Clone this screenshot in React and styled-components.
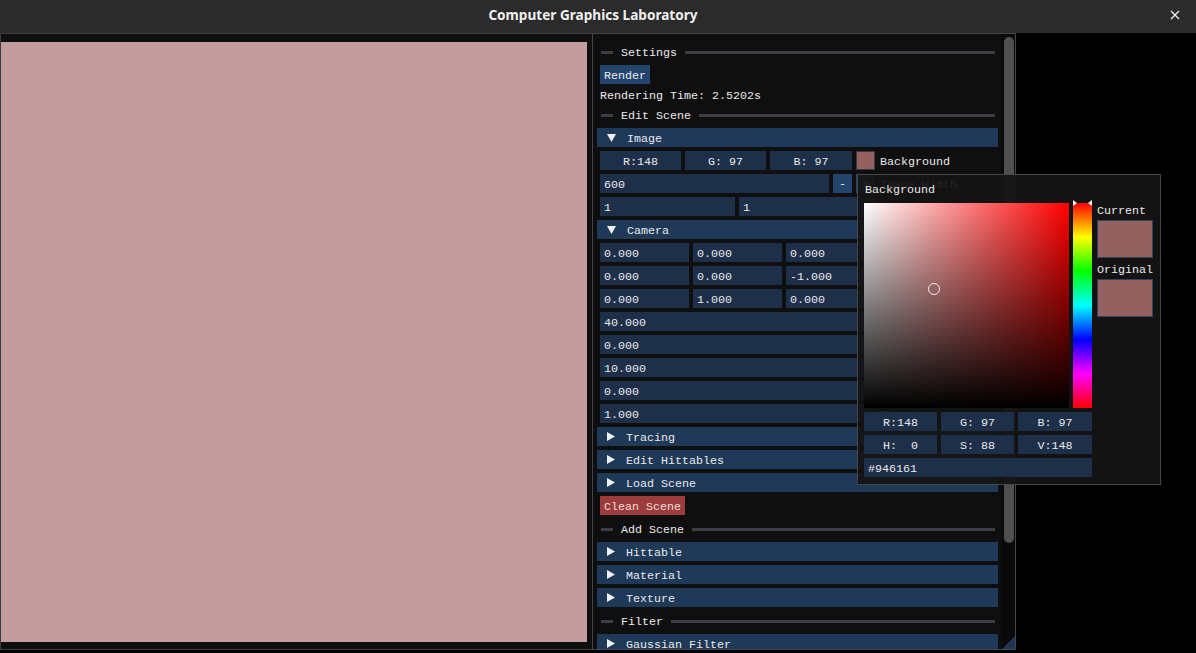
import styled, { createGlobalStyle } from "styled-components";

const mono = `"Liberation Mono", "DejaVu Sans Mono", monospace`;
const SWATCH = "#946161";

const GlobalStyle = createGlobalStyle`
  html, body {
    margin: 0;
    padding: 0;
    background: #000000;
    overflow: hidden;
  }
  * {
    box-sizing: border-box;
  }
`;

const cameraVectors = [
  { values: ["0.000", "0.000", "0.000"], label: "Look From" },
  { values: ["0.000", "0.000", "-1.000"], label: "Look At" },
  { values: ["0.000", "1.000", "0.000"], label: "Vup" },
];

const cameraScalars = [
  { value: "40.000", label: "Vfov" },
  { value: "0.000", label: "Defocus Angle" },
  { value: "10.000", label: "Focus Distance" },
  { value: "0.000", label: "Time 0" },
  { value: "1.000", label: "Time 1" },
];

function Arrow({ open }) {
  return open ? (
    <svg width="9" height="8" viewBox="0 0 9 8">
      <polygon points="0,0 9,0 4.5,8" fill="#f0f0f0" />
    </svg>
  ) : (
    <svg width="8" height="9" viewBox="0 0 8 9">
      <polygon points="0,0 8,4.5 0,9" fill="#f0f0f0" />
    </svg>
  );
}

function Header({ open, children }) {
  return (
    <HeaderBar>
      <Arrow open={open} />
      <HeaderLabel>{children}</HeaderLabel>
    </HeaderBar>
  );
}

function SeparatorText({ children }) {
  return (
    <SepRow>
      <SepLine $short />
      <SepLabel>{children}</SepLabel>
      <SepLine />
    </SepRow>
  );
}

export default function App() {
  return (
    <Screen>
      <GlobalStyle />
      <TitleBar>
        <span />
        <Title>Computer Graphics Laboratory</Title>
        <CloseButton>
          <svg width="10" height="10" viewBox="0 0 10 10">
            <path d="M1 1 L9 9 M9 1 L1 9" stroke="#f0f0f0" strokeWidth="1.3" />
          </svg>
        </CloseButton>
      </TitleBar>

      <Body>
        <ImageWindow>
          <RenderImage />
        </ImageWindow>

        <SettingsWindow>
          <Content>
            <SeparatorText>Settings</SeparatorText>
            <Button>Render</Button>
            <TextLine>Rendering Time: 2.5202s</TextLine>
            <SeparatorText>Edit Scene</SeparatorText>

            <Header open>Image</Header>
            <ItemRow>
              <Field $w={81} $center>R:148</Field>
              <Field $w={81} $center>G: 97</Field>
              <Field $w={82} $center>B: 97</Field>
              <Swatch />
              <Label>Background</Label>
            </ItemRow>
            <ItemRow>
              <Field $w={229}>600</Field>
              <SmallButton>-</SmallButton>
              <SmallButton>+</SmallButton>
              <Label>Image Width</Label>
            </ItemRow>
            <ItemRow>
              <Field $w={135}>1</Field>
              <Field $w={136}>1</Field>
              <Label>Samples / Depth</Label>
            </ItemRow>

            <Header open>Camera</Header>
            {cameraVectors.map((row) => (
              <ItemRow key={row.label}>
                {row.values.map((v, i) => (
                  <Field key={i} $w={89}>
                    {v}
                  </Field>
                ))}
                <Label>{row.label}</Label>
              </ItemRow>
            ))}
            {cameraScalars.map((row) => (
              <ItemRow key={row.label}>
                <Field $w={275}>{row.value}</Field>
                <Label>{row.label}</Label>
              </ItemRow>
            ))}

            <Header>Tracing</Header>
            <Header>Edit Hittables</Header>
            <Header>Load Scene</Header>
            <Button $danger>Clean Scene</Button>

            <SeparatorText>Add Scene</SeparatorText>
            <Header>Hittable</Header>
            <Header>Material</Header>
            <Header>Texture</Header>

            <SeparatorText>Filter</SeparatorText>
            <Header>Gaussian Filter</Header>
          </Content>
          <ScrollTrack>
            <ScrollGrab />
          </ScrollTrack>
          <ResizeGrip />
        </SettingsWindow>
      </Body>

      <ColorPopup>
        <PopupTitle>Background</PopupTitle>
        <PickerRow>
          <SVSquare>
            <PickerCircle />
          </SVSquare>
          <HueBar>
            <HueArrow />
            <HueArrow $right />
          </HueBar>
          <SideColumn>
            <TextLine>Current</TextLine>
            <BigSwatch />
            <TextLine>Original</TextLine>
            <BigSwatch />
          </SideColumn>
        </PickerRow>
        <PopupFields>
          <Field $center>R:148</Field>
          <Field $center>G: 97</Field>
          <Field $center>B: 97</Field>
          <Field $center>H:  0</Field>
          <Field $center>S: 88</Field>
          <Field $center>V:148</Field>
          <HexField>#946161</HexField>
        </PopupFields>
      </ColorPopup>
    </Screen>
  );
}

const Screen = styled.div`
  position: relative;
  width: 1196px;
  height: 653px;
  background: #000000;
  display: flex;
  flex-direction: column;
  overflow: hidden;
  font-family: ${mono};
  font-size: 11.67px;
  color: #eaeaea;
`;

const TitleBar = styled.div`
  height: 33px;
  flex-shrink: 0;
  background: #2b2b2b;
  display: grid;
  grid-template-columns: 1fr auto 1fr;
  align-items: center;
  padding: 0 10px 3px 0;
`;

const Title = styled.div`
  font-family: "Noto Sans", "Open Sans", sans-serif;
  font-weight: 700;
  font-size: 13.6px;
  color: #f0f0f0;
  padding-bottom: 1px;
`;

const CloseButton = styled.div`
  justify-self: end;
  display: flex;
  padding-right: 6px;
`;

const Body = styled.div`
  display: flex;
  align-items: flex-start;
`;

const ImageWindow = styled.div`
  width: 592px;
  height: 617px;
  background: #0f0f0f;
  border: 1px solid #3b3b42;
  border-right: none;
  padding: 8px 5px 7px 0;
`;

const RenderImage = styled.div`
  width: 586px;
  height: 600px;
  background: #c39d9d;
`;

const SettingsWindow = styled.div`
  position: relative;
  width: 424px;
  height: 617px;
  background: #0f0f0f;
  border: 1px solid #45454e;
  display: flex;
  overflow: hidden;
`;

const Content = styled.div`
  flex: 1;
  min-width: 0;
  padding: 8px 6px 0 7px;
  display: flex;
  flex-direction: column;
  gap: 4px;
  white-space: pre;
  line-height: 13px;
`;

const ScrollTrack = styled.div`
  width: 14px;
  flex-shrink: 0;
  background: #0a0a0a;
  padding: 3px 1px 0 3px;
`;

const ScrollGrab = styled.div`
  width: 10px;
  height: 506px;
  background: #4f4f4f;
  border-radius: 5px;
`;

const ResizeGrip = styled.div`
  position: absolute;
  right: 0;
  bottom: 0;
  width: 13px;
  height: 13px;
  background: #1f3556;
  clip-path: polygon(100% 0, 100% 100%, 0 100%);
`;

const SepRow = styled.div`
  height: 19px;
  flex-shrink: 0;
  display: flex;
  align-items: center;
  gap: 8px;
  padding-left: 1px;
`;

const SepLine = styled.div`
  height: 3px;
  margin-top: 1px;
  background: #3e3e47;
  ${(p) => (p.$short ? "width: 12px;" : "flex: 1;")}
`;

const SepLabel = styled.span`
  height: 19px;
  line-height: 22px;
`;

const Button = styled.div`
  align-self: flex-start;
  height: 19px;
  flex-shrink: 0;
  line-height: 22px;
  padding: 0 4px;
  background: ${(p) => (p.$danger ? "#9d3c3c" : "#23456d")};
  color: ${(p) => (p.$danger ? "#f3dcdc" : "#eaeaea")};
`;

const TextLine = styled.div`
  height: 13px;
  flex-shrink: 0;
  line-height: 16px;
  white-space: pre;
`;

const HeaderBar = styled.div`
  height: 19px;
  flex-shrink: 0;
  margin: 0 -3px;
  background: #1f3958;
  display: flex;
  align-items: center;
  padding-left: 10px;
`;

const HeaderLabel = styled.span`
  margin-left: 11px;
  height: 19px;
  line-height: 22px;
`;

const ItemRow = styled.div`
  height: 19px;
  flex-shrink: 0;
  display: flex;
  align-items: center;
  gap: 4px;
`;

const Field = styled.div`
  ${(p) => (p.$w ? `width: ${p.$w}px;` : "")}
  height: 19px;
  flex-shrink: 0;
  line-height: 22px;
  background: #1d2f49;
  padding: 0 4px;
  white-space: pre;
  text-align: ${(p) => (p.$center ? "center" : "left")};
`;

const SmallButton = styled.div`
  width: 19px;
  height: 19px;
  line-height: 21px;
  text-align: center;
  background: #23456d;
`;

const Swatch = styled.div`
  width: 19px;
  height: 19px;
  background: ${SWATCH};
  border: 1px solid #3a3a48;
`;

const Label = styled.span`
  margin-left: 1px;
  height: 19px;
  line-height: 22px;
`;

const ColorPopup = styled.div`
  position: absolute;
  left: 857px;
  top: 174px;
  width: 304px;
  height: 311px;
  background: rgba(20, 20, 20, 0.94);
  border: 1px solid #45454e;
  padding: 7px 6px 6px 6px;
  line-height: 13px;
`;

const PopupTitle = styled.div`
  height: 13px;
  padding-left: 1px;
  margin-bottom: 8px;
  line-height: 16px;
`;

const PickerRow = styled.div`
  display: flex;
  gap: 4px;
  align-items: flex-start;
`;

const SVSquare = styled.div`
  position: relative;
  width: 205px;
  height: 205px;
  background: linear-gradient(to top, #000000, rgba(0, 0, 0, 0)),
    linear-gradient(to right, #ffffff, #ff0000);
`;

const PickerCircle = styled.div`
  position: absolute;
  left: 64px;
  top: 80px;
  width: 12px;
  height: 12px;
  border-radius: 50%;
  border: 1.5px solid #eeeeee;
`;

const HueBar = styled.div`
  position: relative;
  width: 19px;
  height: 205px;
  background: linear-gradient(
    to bottom,
    #ff0000 0%,
    #ffff00 16.67%,
    #00ff00 33.33%,
    #00ffff 50%,
    #0000ff 66.67%,
    #ff00ff 83.33%,
    #ff0000 100%
  );
`;

const HueArrow = styled.div`
  position: absolute;
  top: -3px;
  ${(p) => (p.$right ? "right: 0;" : "left: 0;")}
  width: 0;
  height: 0;
  border-top: 3.5px solid transparent;
  border-bottom: 3.5px solid transparent;
  ${(p) =>
    p.$right
      ? "border-right: 4px solid #f4f4f4;"
      : "border-left: 4px solid #f4f4f4;"}
`;

const SideColumn = styled.div`
  width: 57px;
  display: flex;
  flex-direction: column;
  gap: 4px;
  padding-left: 1px;
`;

const BigSwatch = styled.div`
  width: 56px;
  height: 38px;
  background: ${SWATCH};
  border: 1px solid #34425e;
`;

const PopupFields = styled.div`
  width: 228px;
  margin-top: 4px;
  display: grid;
  grid-template-columns: 73px 73px 74px;
  gap: 4px;
`;

const HexField = styled(Field)`
  grid-column: 1 / -1;
`;
